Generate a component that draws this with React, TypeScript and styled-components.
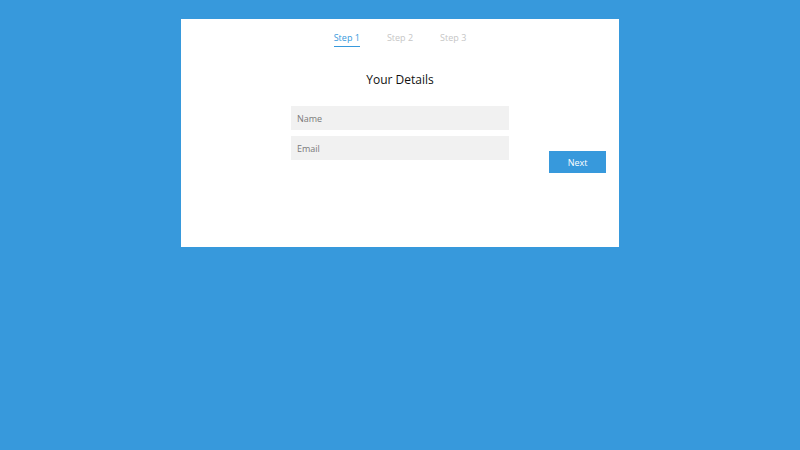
import React, { useState } from "react";
import styled, { createGlobalStyle } from "styled-components";

const GlobalStyle = createGlobalStyle`
  html, body {
    margin: 0;
    padding: 0;
    background: #3799dc;
    font-family: "Open Sans", "Liberation Sans", sans-serif;
  }
`;

const Page = styled.div`
  width: 800px;
  height: 450px;
  padding-top: 19px;
  box-sizing: border-box;
  display: flex;
  justify-content: center;
  align-items: flex-start;
`;

const Card = styled.section`
  width: 438px;
  height: 228px;
  background: #fff;
  box-sizing: border-box;
  padding-top: 12px;
  display: flex;
  flex-direction: column;
  align-items: center;
`;

const Steps = styled.nav`
  display: flex;
  gap: 27px;
`;

const StepTab = styled.span<{ $active?: boolean }>`
  font-size: 9px;
  line-height: 13px;
  padding-bottom: 2px;
  color: ${(p) => (p.$active ? "#3799dc" : "#c6c6c6")};
  border-bottom: 1px solid ${(p) => (p.$active ? "#3799dc" : "transparent")};
`;

const Title = styled.h2`
  margin: 24px 0 0;
  font-size: 12px;
  line-height: 18px;
  font-weight: 400;
  color: #111;
`;

const Form = styled.form`
  width: 100%;
  margin-top: 17px;
  display: grid;
  grid-template-columns: 1fr 218px 1fr;
  row-gap: 6px;
`;

const Field = styled.input`
  grid-column: 2;
  height: 24px;
  box-sizing: border-box;
  border: none;
  outline: none;
  background: #f1f1f1;
  padding: 0 6px;
  font-family: inherit;
  font-size: 9px;
  color: #333;
  &::placeholder {
    color: #7a7a7a;
  }
`;

const NextButton = styled.button`
  grid-column: 3;
  grid-row: 2;
  justify-self: end;
  align-self: start;
  margin: 15px 13px 0 0;
  width: 57px;
  height: 22px;
  border: none;
  background: #3799dc;
  color: #fff;
  font-family: inherit;
  font-size: 9px;
  cursor: pointer;
`;

function App() {
  const [step, setStep] = useState(1);

  return (
    <Page>
      <GlobalStyle />
      <Card>
        <Steps>
          {[1, 2, 3].map((n) => (
            <StepTab key={n} $active={n === step}>
              Step {n}
            </StepTab>
          ))}
        </Steps>
        <Title>Your Details</Title>
        <Form onSubmit={(e) => e.preventDefault()}>
          <Field placeholder="Name" />
          <Field placeholder="Email" />
          <NextButton type="button" onClick={() => setStep(step < 3 ? step + 1 : 1)}>
            Next
          </NextButton>
        </Form>
      </Card>
    </Page>
  );
}

export default App;
